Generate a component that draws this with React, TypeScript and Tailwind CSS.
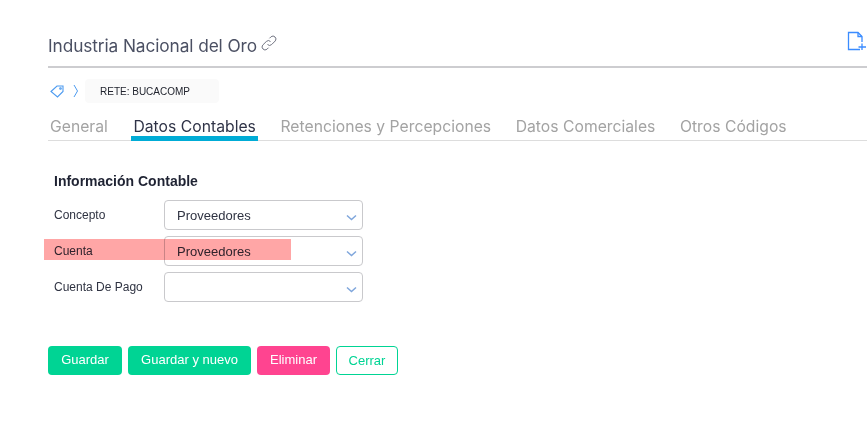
import React from "react";

const tabs = ["General", "Datos Contables", "Retenciones y Percepciones", "Datos Comerciales", "Otros Códigos"];

const fields = [
  { label: "Concepto", value: "Proveedores" },
  { label: "Cuenta", value: "Proveedores" },
  { label: "Cuenta De Pago", value: "" },
];

const Chevron = () => (
  <svg width="11" height="7" viewBox="0 0 11 7" fill="none" className="absolute right-[5px] top-[13px]">
    <path d="M1 1.5 L5.5 5.5 L10 1.5" stroke="#7fa6dc" strokeWidth="1.5" />
  </svg>
);

export default function App() {
  return (
    <div className="w-[867px] h-[447px] overflow-hidden bg-white pl-12 font-['Liberation_Sans',sans-serif] relative">
      {/* header */}
      <div className="h-[68px] border-b-2 border-[#cdcdd0] flex items-end relative">
        <h1 className="font-['Inter',sans-serif] text-[17.3px] leading-[24px] text-[#4b5063] mb-[8px] tracking-[-0.1px]">
          Industria Nacional del Oro
        </h1>
        <svg width="18" height="18" viewBox="0 0 18 18" fill="none" stroke="#6f7280" strokeWidth="1" className="ml-[3px] mb-[14px]">
          <path d="M7.5 10.5 a3 3 0 0 0 4.2 0 l3.6 -3.6 a3 3 0 0 0 -4.2 -4.2 l-1.6 1.6" />
          <path d="M10.5 7.5 a3 3 0 0 0 -4.2 0 l-3.6 3.6 a3 3 0 0 0 4.2 4.2 l1.6 -1.6" />
        </svg>
        <svg width="20" height="20" viewBox="0 0 20 20" fill="none" stroke="#3b8cff" strokeWidth="1.3" className="absolute left-[799px] top-[31px]">
          <path d="M13 18.5 H1.5 V1.5 H11 L15 5.5 V11" />
          <path d="M11 1.5 V5.5 H15" />
          <path d="M15 12.5 V19 M11.5 16 H19" />
        </svg>
      </div>

      {/* breadcrumb */}
      <div className="flex items-center h-[24px] mt-[11px]">
        <svg width="15" height="14" viewBox="0 0 15 14" fill="none" stroke="#4d9bf0" strokeWidth="1.1" className="ml-[2px]">
          <path d="M1 7.5 L7 2 H13 V7.5 L7.5 13 Z" />
          <circle cx="10.5" cy="4.5" r="0.8" />
        </svg>
        <svg width="6" height="14" viewBox="0 0 6 14" fill="none" stroke="#4d9bf0" strokeWidth="1" className="ml-[8px]">
          <path d="M1 1 L4.5 7 L1 13" />
        </svg>
        <div className="ml-[6px] w-[134px] h-[24px] rounded-[4px] bg-[#fafafa] pl-[15px] text-[10px] leading-[25px] text-[#22252f]">
          RETE: BUCACOMP
        </div>
      </div>

      {/* tabs */}
      <div className="flex mt-[8px] h-[30px] border-b border-[#dddddd] font-['Inter',sans-serif] text-[15.7px] tracking-[0.02px] gap-[24.5px] pl-[2px]">
        {tabs.map((t, i) => (
          <div
            key={t}
            className={
              i === 1
                ? "h-[30px] -mx-[2px] px-[2px] border-b-[5px] border-[#00acd6] text-[#2f3347] leading-[32px] ml-[-1px]"
                : "text-[#a3a3a3] leading-[32px]"
            }
          >
            {t}
          </div>
        ))}
      </div>

      {/* form */}
      <div className="pl-[6px] pt-[32px]">
        <h2 className="text-[14px] font-bold leading-[16px] text-[#1f2333]">Información Contable</h2>
        <div className="mt-[11px] flex flex-col gap-[6px]">
          {fields.map((f) => (
            <div key={f.label} className="flex items-center">
              <label className="w-[110px] text-[12px] text-[#2f3342]">{f.label}</label>
              <div className="relative w-[199px] h-[30px] rounded-[4px] border border-[#c9c9cc] pl-[12px] text-[13px] leading-[29px] text-[#2f3342]">
                {f.value}
                <Chevron />
              </div>
            </div>
          ))}
        </div>
      </div>

      {/* buttons */}
      <div className="flex gap-[6px] mt-[44px] text-[13px] leading-[27px]">
        <button className="h-[29px] w-[74px] rounded-[4px] bg-[#00d494] text-white pb-[2px]">Guardar</button>
        <button className="h-[29px] w-[123px] rounded-[4px] bg-[#00d494] text-white pb-[2px]">Guardar y nuevo</button>
        <button className="h-[29px] w-[73px] rounded-[4px] bg-[#ff4490] text-white pb-[2px]">Eliminar</button>
        <button className="h-[29px] w-[62px] rounded-[4px] border border-[#00d494] bg-white text-[#00d494] pb-[4px]">Cerrar</button>
      </div>

      {/* highlight over Cuenta row */}
      <div className="absolute left-[44px] top-[239px] w-[247px] h-[21px] bg-[#ffa6a6] mix-blend-multiply pointer-events-none" />
    </div>
  );
}
